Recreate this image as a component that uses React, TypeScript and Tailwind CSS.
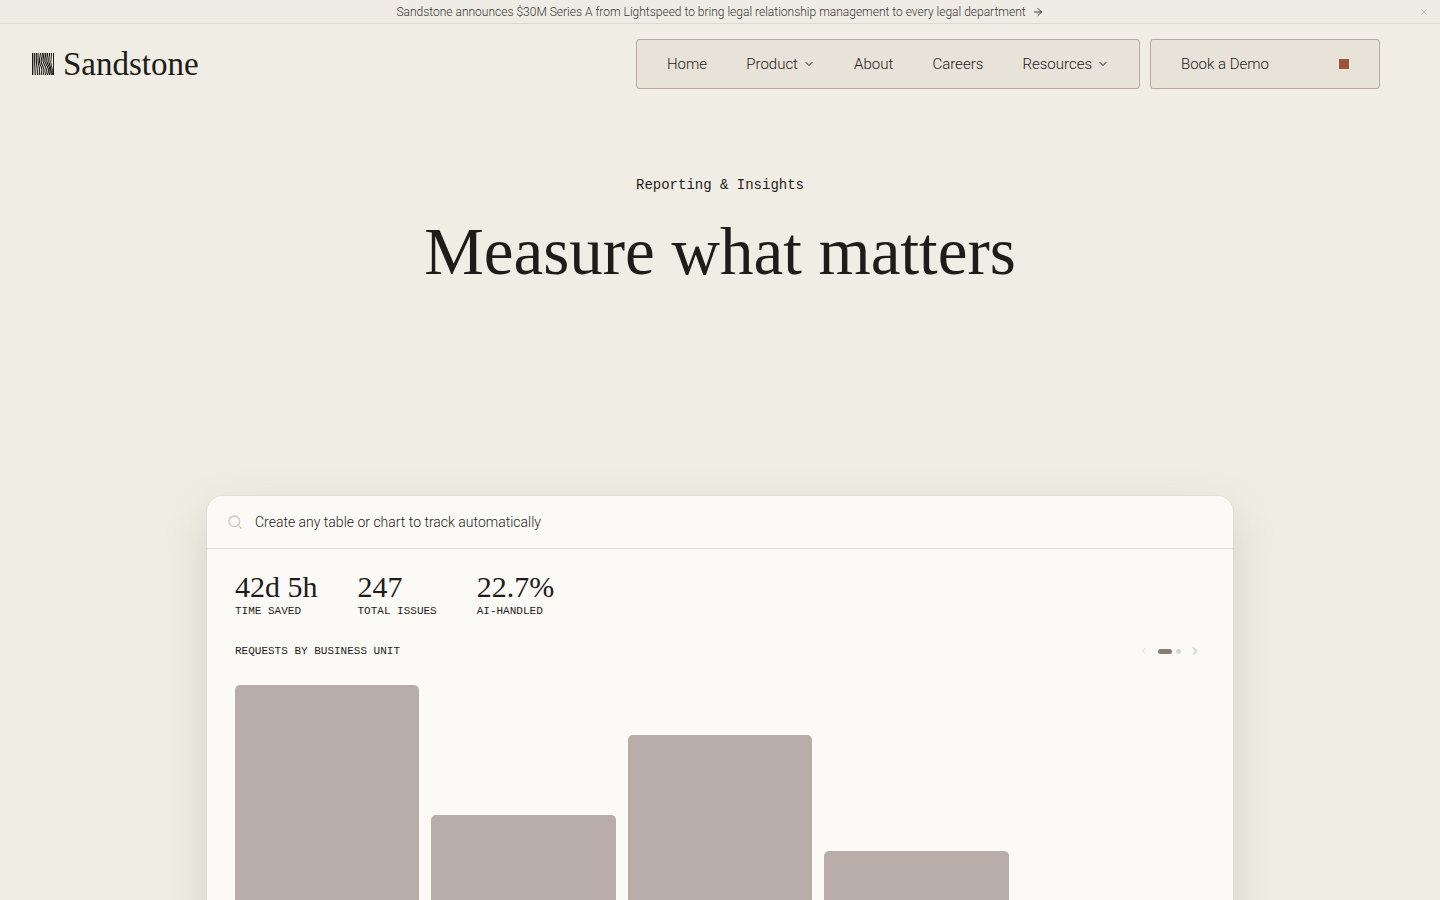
import { useState } from "react";
import { ArrowRight, ChevronDown, ChevronLeft, ChevronRight, Search, X } from "lucide-react";

const navItems = [
  { label: "Home", menu: false },
  { label: "Product", menu: true },
  { label: "About", menu: false },
  { label: "Careers", menu: false },
  { label: "Resources", menu: true },
];

const stats = [
  { value: "42d 5h", label: "TIME SAVED" },
  { value: "247", label: "TOTAL ISSUES" },
  { value: "22.7%", label: "AI-HANDLED" },
];

const bars = [360, 230, 310, 194, 120];

function LogoMark() {
  return (
    <svg className="size-[22px] shrink-0" viewBox="0 0 22 22" fill="none" stroke="#1f1b19" aria-hidden="true">
      <path d="M.7 0V22" strokeWidth="1.4" />
      <path d="M2.6 0V8C2.6 13 3.2 16 3.2 22" strokeWidth="1.1" />
      <path d="M4.4 0C4.4 7 4 9 4.800 13S5.500 18 5.300 22" strokeWidth="1.1" />
      <path d="M6 0C6.400 5 5.400 8 6.600 12S8 18 7.200 22" strokeWidth="1.1" />
      <path d="M8.400 0C8.400 5 6.200 7 8 11S10.600 17 9 22" strokeWidth="1.1" />
      <path d="M10.400 0C10.600 5 7.800 7 9.800 11S13 17 11 22" strokeWidth="1.2" />
      <path d="M12 0C12.400 4 9.600 6.500 11.800 10.500S15.400 17 13.200 22" strokeWidth="1.2" />
      <path d="M13.800 0C14 4 11.400 6.500 13.800 10.500S17.400 17 15.400 22" strokeWidth="1.2" />
      <path d="M15.600 0C15.600 4 13.600 6.500 15.600 10.500S18.800 17 17.400 22" strokeWidth="1.2" />
      <path d="M17.600 0C17.600 5 15.800 7 17.400 11S19.600 17 19.200 22" strokeWidth="1.2" />
      <path d="M19.500 0C19.500 6 18.200 8 19.200 12S20.600 18 20.400 22" strokeWidth="1" />
      <path d="M21.500 0V22" strokeWidth="1" />
    </svg>
  );
}

export default function App() {
  const [query, setQuery] = useState("Create any table or chart to track automatically");

  return (
    <div className="min-h-screen bg-[#f0ede4] font-[Roboto,sans-serif] font-light text-[#1f1b19]">
      <div className="relative flex h-6 items-center justify-center border-b border-[#dcd9d2] bg-[#efece5]">
        <a href="#series-a" className="flex items-center gap-1.5 text-xs text-[#3a3633]">
          Sandstone announces $30M Series A from Lightspeed to bring legal relationship management to every legal
          department
          <ArrowRight className="size-3" strokeWidth={2} />
        </a>
        <button type="button" aria-label="Dismiss" className="absolute right-[11px] text-[#bdb9b3]">
          <X className="size-[10px]" strokeWidth={2} />
        </button>
      </div>

      <header className="flex items-center justify-between pt-[15px] pr-[60px] pl-8">
        <a href="#top" className="flex items-center gap-[9px]">
          <LogoMark />
          <span className="font-['Liberation_Serif',serif] text-[33px] leading-none font-normal">Sandstone</span>
        </a>
        <div className="flex gap-[10px] text-[15px]">
          <nav className="flex h-[50px] w-[504px] items-center justify-between rounded-[3px] border border-[#b9a9a1] bg-[#e8e3d9] px-[30px]">
            {navItems.map((item) =>
              item.menu ? (
                <button key={item.label} type="button" className="flex items-center gap-[5px]">
                  {item.label}
                  <ChevronDown className="size-3" strokeWidth={2} />
                </button>
              ) : (
                <a key={item.label} href={"#" + item.label.toLowerCase()}>
                  {item.label}
                </a>
              ),
            )}
          </nav>
          <a
            href="#demo"
            className="flex h-[50px] w-[230px] items-center justify-between rounded-[3px] border border-[#b9a9a1] bg-[#e8e3d9] px-[30px]"
          >
            Book a Demo
            <span className="size-[10px] bg-[#9d5137]" />
          </a>
        </div>
      </header>

      <main className="px-8">
        <section className="flex flex-col items-center gap-5 pt-[86px] text-center">
          <p className="font-['Liberation_Mono',monospace] text-sm font-normal">Reporting &amp; Insights</p>
          <h1 className="font-['Liberation_Serif',serif] text-[67px] leading-[72px] font-normal">
            Measure what matters
          </h1>
        </section>

        <section className="mx-auto mt-[209px] max-w-[1026px] rounded-t-2xl bg-[#fbfaf6] shadow-[0_0_0_1px_rgba(60,50,40,0.03),0_16px_48px_rgba(60,54,44,0.14)]">
          <label className="flex h-[53px] items-center gap-3 border-b border-[#e3ddd4] px-5">
            <Search className="size-4 text-[#cfc5c0]" strokeWidth={2} />
            <input
              type="text"
              aria-label="Create a table or chart"
              value={query}
              onChange={(e) => setQuery(e.target.value)}
              className="min-w-0 flex-1 bg-transparent text-sm outline-none"
            />
          </label>

          <div className="px-7 pt-[21px]">
            <dl className="flex gap-10">
              {stats.map((stat) => (
                <div key={stat.label} className="flex flex-col-reverse">
                  <dt className="font-['Liberation_Mono',monospace] text-[11px] leading-4 font-normal">{stat.label}</dt>
                  <dd className="font-['Liberation_Serif',serif] text-3xl leading-[33px] font-normal">{stat.value}</dd>
                </div>
              ))}
            </dl>

            <div className="mt-[23px] flex h-[18px] items-center justify-between">
              <h2 className="font-['Liberation_Mono',monospace] text-[11px] font-normal">REQUESTS BY BUSINESS UNIT</h2>
              <div className="flex items-center gap-1">
                <button type="button" aria-label="Previous" className="flex w-5 justify-center text-[#e6e2dd]">
                  <ChevronLeft className="size-3" strokeWidth={2} />
                </button>
                <span className="h-[5px] w-[14px] rounded-full bg-[#8b7b75]" />
                <span className="size-[5px] rounded-full bg-[#d9d4cf]" />
                <button type="button" aria-label="Next" className="flex w-5 justify-center text-[#aaa39d]">
                  <ChevronRight className="size-3" strokeWidth={2} />
                </button>
              </div>
            </div>

            <div className="mt-[25px] grid grid-cols-5 items-end gap-3 pb-7">
              {bars.map((height, i) => (
                <div key={i} className="rounded-t-[5px] bg-[#b8ada8]" style={{ height }} />
              ))}
            </div>
          </div>
        </section>
      </main>
    </div>
  );
}
